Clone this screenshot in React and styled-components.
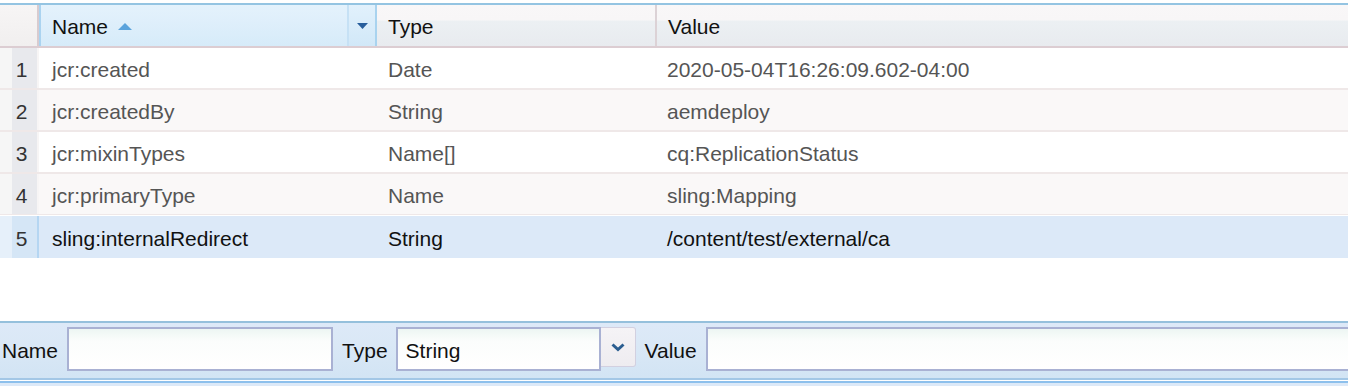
import React from 'react'
import styled, { createGlobalStyle } from 'styled-components'

const GlobalStyle = createGlobalStyle`
  html, body {
    margin: 0;
    padding: 0;
    background: #fff;
  }
  body {
    font-family: "Liberation Sans", Arial, Helvetica, sans-serif;
    font-size: 21px;
    overflow: hidden;
  }
`

const Page = styled.div`
  width: 1348px;
  height: 386px;
  display: flex;
  flex-direction: column;
  padding-top: 3px;
  box-sizing: border-box;
`

const Grid = styled.div`
  border-top: 2px solid #94c4e2;
  display: flex;
  flex-direction: column;
`

const cols = '39px 338px 280px 1fr'

const HeaderRow = styled.div`
  display: grid;
  grid-template-columns: ${cols};
  height: 43px;
  box-sizing: border-box;
  border-bottom: 2px solid #dccdd2;
`

const HeadCell = styled.div`
  display: flex;
  align-items: center;
  padding-left: ${p => p.$pad || 11}px;
  padding-top: 2px;
  color: #111;
  box-sizing: border-box;
  background: linear-gradient(#f9f7f8 0, #f8f6f7 36%, #ecf0f3 40%, #e8ebef 100%);
  border-right: ${p => (p.$last ? 'none' : '2px solid #dcd2d6')};
`

const NumHead = styled(HeadCell)`
  background: linear-gradient(#f7f5f5, #f1efef);
  border-right: 2px solid #d8cbcf;
  padding-left: 0;
`

const NameHead = styled(HeadCell)`
  background: linear-gradient(#e4f2fc 0, #dfeffb 40%, #d6ebf9 100%);
  border-left: 2px solid #aad3f0;
  border-right: 2px solid #a9d3ef;
  padding-left: 11px;
  padding-top: 0;
  padding-right: 0;
`

const HeadLabel = styled.span`
  flex: 1;
  display: flex;
  align-items: center;
  gap: 10px;
  padding-top: 2px;
`

const HeadMenu = styled.div`
  width: 26px;
  align-self: stretch;
  display: flex;
  align-items: center;
  justify-content: center;
  border-left: 2px solid #c6e1f5;
  background: linear-gradient(#e2f1fc, #d1e8f8);
`

const Row = styled.div`
  display: grid;
  grid-template-columns: ${cols};
  height: 42px;
  box-sizing: border-box;
  border-bottom: 2px solid #efe8e8;
  background: ${p => (p.$selected ? '#dce9f8' : p.$odd ? '#ffffff' : '#faf8f8')};
  color: ${p => (p.$selected ? '#111' : '#555')};
  ${p => p.$selected && 'border-top: 1px solid #fff; border-bottom: none; margin-top: -1px; height: 43px;'}
`

const NumCell = styled.div`
  display: flex;
  align-items: center;
  justify-content: center;
  padding-left: 6px;
  padding-top: 3px;
  color: #333;
  background: ${p =>
    p.$selected
      ? 'linear-gradient(to right, #e6f0fa 0, #e6f0fa 12px, #d5e6f6 12px)'
      : 'linear-gradient(to right, #f6f6f6 0, #f6f6f6 12px, #e8e9ed 12px)'};
  border-right: 2px solid ${p => (p.$selected ? '#b5d6f2' : '#f7f5f5')};
`

const Cell = styled.div`
  display: flex;
  align-items: center;
  padding-left: ${p => p.$pad || 11}px;
  padding-top: 3px;
  white-space: nowrap;
`

const Spacer = styled.div`
  flex: 1;
`

const Footer = styled.div`
  background: #dce9f8;
  padding-bottom: 6px;
`

const FormBar = styled.div`
  height: 59px;
  box-sizing: border-box;
  border-top: 2px solid #95c0dc;
  border-bottom: 2px solid #a3c7e6;
  background: linear-gradient(#dde9f8 0, #dae8f6 40%, #d2e4f4 100%);
  display: flex;
  align-items: flex-start;
  padding-top: 4px;
  padding-left: 2px;
  overflow: hidden;
  box-shadow: 0 1px 0 #fff, 0 3px 0 #8dc0ec;
`

const Label = styled.label`
  color: #111;
  height: 44px;
  padding-top: 4px;
  box-sizing: border-box;
  display: flex;
  align-items: center;
  margin-right: ${p => p.$gap || 9}px;
`

const Input = styled.div`
  height: 44px;
  box-sizing: border-box;
  width: ${p => (p.$w ? `${p.$w}px` : 'auto')};
  flex: ${p => (p.$w ? 'none' : 1)};
  border: 2px solid #a9b1d3;
  ${p => p.$open && 'border-right: none;'}
  background: linear-gradient(#edf6f3 0, #fbfdfc 30%, #fff 100%);
  margin-right: ${p => p.$mr || 0}px;
  display: flex;
  align-items: center;
  padding-left: 8px;
  padding-top: 4px;
  color: #111;
`

const SelectBtn = styled.div`
  width: 35px;
  height: 40px;
  box-sizing: border-box;
  background: linear-gradient(#f5f3f6, #eeecf0);
  border: 1px solid #d2d0e0;
  border-left: none;
  border-radius: 0 3px 3px 0;
  display: flex;
  align-items: center;
  justify-content: center;
  margin-right: 9px;
`

const Select = styled.div`
  display: flex;
  align-items: flex-start;
`

const SortUp = () => (
  <svg width="14" height="7" viewBox="0 0 14 7">
    <path d="M0 7 L7 0 L14 7 Z" fill="#5ba3dc" />
  </svg>
)

const MenuDown = () => (
  <svg width="11" height="6" viewBox="0 0 11 6">
    <path d="M0 0 L11 0 L5.5 6 Z" fill="#285e9c" />
  </svg>
)

const Chevron = () => (
  <svg width="14" height="9" viewBox="0 0 14 9">
    <path d="M1.5 1.5 L7 6.5 L12.5 1.5" fill="none" stroke="#2a5d90" strokeWidth="3" />
  </svg>
)

const rows = [
  ['jcr:created', 'Date', '2020-05-04T16:26:09.602-04:00'],
  ['jcr:createdBy', 'String', 'aemdeploy'],
  ['jcr:mixinTypes', 'Name[]', 'cq:ReplicationStatus'],
  ['jcr:primaryType', 'Name', 'sling:Mapping'],
  ['sling:internalRedirect', 'String', '/content/test/external/ca'],
]

export default function App() {
  return (
    <Page>
      <GlobalStyle />
      <Grid>
        <HeaderRow>
          <NumHead />
          <NameHead>
            <HeadLabel>
              Name <SortUp />
            </HeadLabel>
            <HeadMenu>
              <MenuDown />
            </HeadMenu>
          </NameHead>
          <HeadCell>Type</HeadCell>
          <HeadCell $last>Value</HeadCell>
        </HeaderRow>
        {rows.map((r, i) => {
          const selected = i === 4
          return (
            <Row key={i} $odd={i % 2 === 0} $selected={selected}>
              <NumCell $selected={selected}>{i + 1}</NumCell>
              <Cell $pad={13}>{r[0]}</Cell>
              <Cell>{r[1]}</Cell>
              <Cell $pad={10}>{r[2]}</Cell>
            </Row>
          )
        })}
      </Grid>
      <Spacer />
      <Footer>
        <FormBar>
          <Label $gap={9}>Name</Label>
          <Input $w={266} $mr={9} />
          <Label $gap={8}>Type</Label>
          <Select>
            <Input $w={205}>String</Input>
            <SelectBtn>
              <Chevron />
            </SelectBtn>
          </Select>
          <Label $gap={9}>Value</Label>
          <Input $open />
        </FormBar>
      </Footer>
    </Page>
  )
}
